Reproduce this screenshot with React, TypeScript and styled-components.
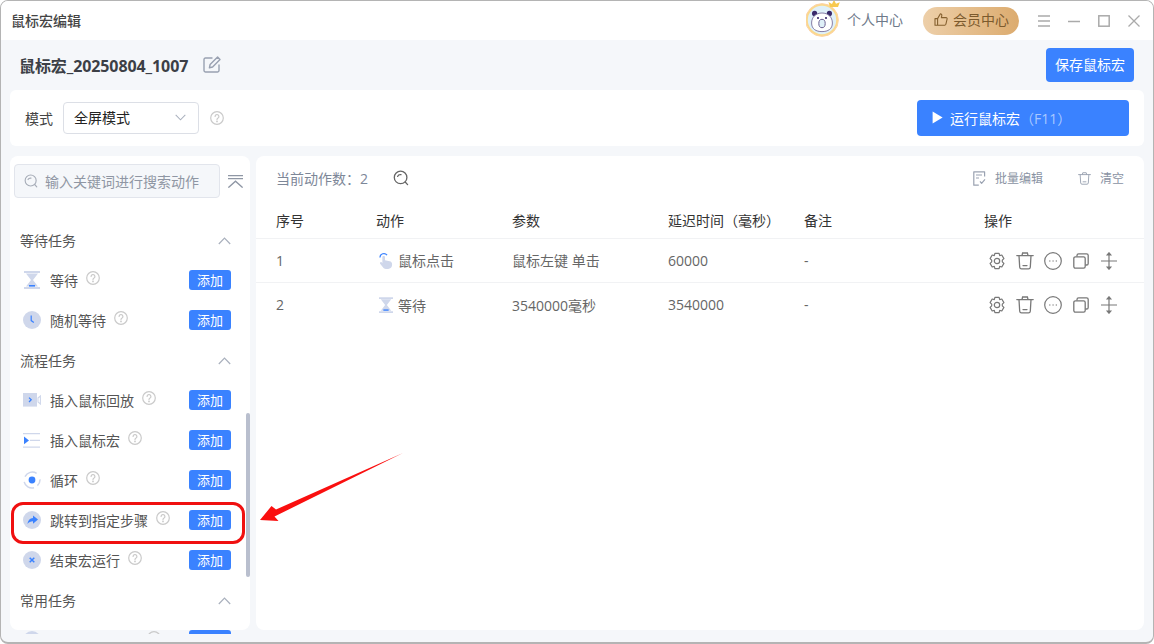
import React from 'react';
import styled, { createGlobalStyle } from 'styled-components';

const FONT = `"Open Sans", "Noto Sans CJK SC", sans-serif`;
const BLUE = '#3a82ff';
const PALE = '#cfd7eb';
const ROW_ICON = '#787878';

const GlobalStyle = createGlobalStyle`
    html, body { margin: 0; padding: 0; background: #fff; }
    * { box-sizing: border-box; }
`;

/* ---------- icons ---------- */
const HelpIcon = () => (
    <svg width="14" height="14" viewBox="0 0 14 14" fill="none" stroke="#cacaca" strokeWidth="1.2" strokeLinecap="round">
        <circle cx="7" cy="7" r="6.3" />
        <path d="M5.1 5.5a1.9 1.9 0 1 1 2.9 1.6c-.7.4-1 .8-1 1.5" />
        <circle cx="7" cy="10.4" r=".35" fill="#cacaca" />
    </svg>
);
const SearchIcon = ({ color, size }: { color: string; size: number }) => (
    <svg width={size} height={size} viewBox="0 0 16 16" fill="none" stroke={color} strokeWidth="1.3" strokeLinecap="round">
        <circle cx="7.6" cy="7.4" r="6.3" />
        <path d="M4.6 6.4c.6-1.3 2-1.9 3.4-1.7M12.2 12l2.4 2.6" />
    </svg>
);
const Chevron = ({ up }: { up?: boolean }) => (
    <svg width={up ? 13 : 11} height={up ? 8 : 7} viewBox="0 0 13 8" fill="none" stroke="#a9b0bd" strokeWidth="1.2">
        <path d={up ? 'M.8 7 6.5 1.2 12.2 7' : 'M.8 1 6.5 6.8 12.2 1'} />
    </svg>
);
const EditIcon = () => (
    <svg width="18" height="18" viewBox="0 0 18 18" fill="none" stroke="#99a1b1" strokeWidth="1.4" strokeLinecap="round" strokeLinejoin="round">
        <path d="M9 2H2.4C1.6 2 1 2.6 1 3.4v11.2c0 .8.6 1.4 1.4 1.4h12.2c.8 0 1.4-.6 1.4-1.4V9" />
        <path d="M14.6 1 17 3.4 9.6 11l-3.2.8.7-3.3z" />
    </svg>
);
const FoldIcon = () => (
    <svg width="15" height="13" viewBox="0 0 15 13" fill="none" stroke="#8f97a5" strokeWidth="1.3">
        <path d="M0 .7h15M0 3.6h15M.4 12.6 7.5 6.2l7.1 6.4" />
    </svg>
);
const Hourglass = ({ small }: { small?: boolean }) => (
    <svg width={small ? 14 : 16} height="18" viewBox="0 0 16 18">
        <path d="M0 0h16v2H0zM0 16h16v2H0z" fill={PALE} />
        <path d="M2 2.4h12L9 9l5 6.6H2L7 9z" fill={PALE} />
        <path d="M5 14h6v1.6H5z" fill={BLUE} />
    </svg>
);
const ClockIcon = () => (
    <svg width="18" height="18" viewBox="0 0 18 18" fill="none">
        <circle cx="9" cy="9" r="9" fill={PALE} />
        <path d="M8.2 4.4v5.2l2.6 2" stroke={BLUE} strokeWidth="1.2" />
    </svg>
);
const VideoIcon = () => (
    <svg width="18" height="14" viewBox="0 0 18 14" fill="none">
        <rect x="0" y="0" width="14" height="13.6" fill={PALE} />
        <path d="m6 4.6 2.2 2.2L6 9" stroke={BLUE} strokeWidth="1.3" />
        <path d="m15 5 2.4-2v8L15 9z" stroke={PALE} strokeWidth="1.1" />
    </svg>
);
const MacroIcon = () => (
    <svg width="18" height="15" viewBox="0 0 18 15">
        <path d="M0 0h17v1.3H0zM0 13.4h17v1.3H0zM7 6.8h10v1.3H7z" fill={PALE} />
        <path d="M1 3.6 6 7.4l-5 3.8z" fill={BLUE} />
    </svg>
);
const LoopIcon = () => (
    <svg width="18" height="18" viewBox="0 0 18 18" fill="none" stroke={PALE} strokeWidth="1.5">
        <path d="M2 5.6A8 8 0 0 1 13.6 2.4M17 8.4a8 8 0 0 1-2.6 6.2M11 16.8a8 8 0 0 1-9.8-6" />
        <circle cx="9" cy="9" r="3.4" fill={BLUE} stroke="none" />
    </svg>
);
const JumpIcon = () => (
    <svg width="18" height="18" viewBox="0 0 18 18">
        <circle cx="9" cy="9" r="9" fill={PALE} />
        <path d="M10 4.4 15 8.6 10 12.8V10.2C7.6 10.2 5.8 11 4.4 13 4.8 9.4 6.8 7.2 10 6.9z" fill={BLUE} />
    </svg>
);
const StopIcon = () => (
    <svg width="18" height="18" viewBox="0 0 18 18" fill="none">
        <circle cx="9" cy="9" r="9" fill={PALE} />
        <path d="m6.7 6.7 4.6 4.6m0-4.6-4.6 4.6" stroke={BLUE} strokeWidth="1.5" />
    </svg>
);
const HandIcon = () => (
    <svg width="14" height="19" viewBox="0 0 15 19" fill="none">
        <path d="M1 6.2a4.2 4.2 0 0 1 7.6-2.4" stroke={BLUE} strokeWidth="1.3" />
        <path d="M3.6 5.8c0-1.5 2.8-1.5 2.8 0v3.4l5 1c1.6.3 2.6 1.3 2.6 2.8v1.4c0 2.4-1.7 4.2-4.2 4.2H7.4c-1.4 0-2.4-.6-3.2-1.8L1.2 13c-.7-1.2.8-2.4 1.8-1.4l.6.8z" fill={PALE} />
    </svg>
);
const GearIcon = () => (
    <svg width="18" height="18" viewBox="0 0 18 18" fill="none" stroke={ROW_ICON} strokeWidth="1.2" strokeLinejoin="round">
        <path d="M6.9 1.4h4.2l.6 2.2 2.1-.6 2.1 3.6-1.6 1.6v1.6l1.6 1.6-2.1 3.6-2.1-.6-.6 2.2H6.9l-.6-2.2-2.1.6-2.1-3.6 1.6-1.6V8.2L2.1 6.6 4.2 3l2.1.6z" />
        <circle cx="9" cy="9" r="2.7" />
    </svg>
);
const TrashIcon = ({ color = ROW_ICON, size = 18 }: { color?: string; size?: number }) => (
    <svg width={size} height={size} viewBox="0 0 18 18" fill="none" stroke={color} strokeWidth="1.3" strokeLinecap="round">
        <path d="M.8 3.6h16.4M6 3.4 6.6 1h4.8l.6 2.4M3 3.8l.7 11.4c.1 1 .8 1.7 1.8 1.7h7c1 0 1.7-.7 1.8-1.7L15 3.8M7 13.6h4" />
    </svg>
);
const DotsIcon = () => (
    <svg width="18" height="18" viewBox="0 0 18 18" fill="none" stroke={ROW_ICON} strokeWidth="1.2">
        <circle cx="9" cy="9" r="8.3" />
        <path d="M5.4 9h.9M8.6 9h.9M11.8 9h.9" strokeWidth="1.3" />
    </svg>
);
const CopyIcon = () => (
    <svg width="16" height="16" viewBox="0 0 16 16" fill="none" stroke={ROW_ICON} strokeWidth="1.3" strokeLinejoin="round">
        <rect x=".8" y="3.8" width="11.4" height="11.4" rx="1.6" />
        <path d="M4 3.6V2.4C4 1.5 4.6.8 5.6.8h8c.9 0 1.6.7 1.6 1.6v8c0 1-.7 1.6-1.6 1.6h-1.2" />
    </svg>
);
const MoveIcon = () => (
    <svg width="16" height="18" viewBox="0 0 16 18" fill="none" stroke={ROW_ICON} strokeWidth="1.2">
        <path d="M0 9h16M8 1v16" />
        <path d="M6.2 3 8 .8 9.8 3zM6.2 15 8 17.2 9.8 15z" fill={ROW_ICON} />
    </svg>
);
const BatchIcon = () => (
    <svg width="13" height="15" viewBox="0 0 13 15" fill="none" stroke="#9aa2b1" strokeWidth="1.2" strokeLinejoin="round">
        <path d="M11.6 5.4V.8H.8v13.4h5" />
        <path d="M3 4h6M3 7h3M7 10.4l1.6 2 3.4-4" />
    </svg>
);
const HamburgerIcon = () => (
    <svg width="12" height="12" viewBox="0 0 12 12" stroke="#aaa" strokeWidth="1.3"><path d="M0 1h12M0 6h12M0 11h12" /></svg>
);
const MinIcon = () => (
    <svg width="12" height="12" viewBox="0 0 12 12" stroke="#aaa" strokeWidth="1.3"><path d="M0 6.5h12" /></svg>
);
const MaxIcon = () => (
    <svg width="12" height="12" viewBox="0 0 12 12" fill="none" stroke="#aaa" strokeWidth="1.5"><rect x=".8" y=".8" width="10.4" height="10.4" /></svg>
);
const CloseIcon = () => (
    <svg width="12" height="12" viewBox="0 0 12 12" stroke="#aaa" strokeWidth="1.3"><path d="m.5.5 11 11m0-11-11 11" /></svg>
);
const ThumbIcon = () => (
    <svg width="14" height="13" viewBox="0 0 14 13" fill="none" stroke="#85602f" strokeWidth="1.1" strokeLinejoin="round">
        <path d="M1 5.6h2.6v6.6H1zM3.6 5.6 6.4.8c1 0 1.6.7 1.4 1.7L7.4 4.6h4.6c.8 0 1.3.7 1.1 1.4l-1.2 5.2c-.2.6-.6 1-1.2 1H3.6" />
    </svg>
);
const PlayIcon = () => (
    <svg width="11" height="13" viewBox="0 0 11 13"><path d="M.6.6 10.6 6.5.6 12.4z" fill="#fff" /></svg>
);
const PandaAvatar = () => (
    <svg width="36" height="38" viewBox="0 0 36 38">
        <circle cx="16" cy="21" r="15.2" fill="#dff0f8" stroke="#fbd98b" strokeWidth="2" />
        <circle cx="16" cy="21" r="16.4" fill="none" stroke="#fbd2a6" strokeWidth="1" />
        <circle cx="8.6" cy="14.4" r="2.6" fill="#3a2a6a" />
        <circle cx="23.4" cy="14.4" r="2.6" fill="#3a2a6a" />
        <path d="M5.6 24c0-6 4.4-10 10.4-10s10.4 4 10.4 10-4.4 8.6-10.4 8.6S5.6 30 5.6 24z" fill="#fff" stroke="#6b5f90" strokeWidth=".8" />
        <circle cx="12" cy="19" r="1.1" fill="#3a2a6a" />
        <circle cx="20" cy="19" r="1.1" fill="#3a2a6a" />
        <ellipse cx="16" cy="24.5" rx="3.2" ry="4.2" fill="#dff0f8" stroke="#6b5f90" strokeWidth="1" />
        <path d="m24 8-1.6-5 3.6 2L28 .8l2 4 3.8-1.6L32 8z" fill="#f8c94e" />
    </svg>
);

/* ---------- window ---------- */
const Window = styled.div`
    position: relative;
    width: 1154px;
    height: 644px;
    overflow: hidden;
    background: #f5f7fa;
    border: 1px solid #b4b4b4;
    border-bottom-width: 2px;
    border-radius: 8px;
    font-family: ${FONT};
    font-size: 14px;
    color: #333;
`;
const TitleBar = styled.div`
    display: flex;
    align-items: center;
    justify-content: space-between;
    height: 39px;
    padding: 0 13px 0 10px;
    background: #fff;
`;
const AppName = styled.div`
    margin-top: -2px;
    color: #444;
    font-weight: 500;
`;
const TitleActions = styled.div`
    display: flex;
    align-items: center;
`;
const AvatarWrap = styled.div`
    display: flex;
    margin: -6px 5px 0 0;
`;
const ProfileLabel = styled.span`
    margin-top: -3px;
    color: #6f7a8a;
`;
const VipPill = styled.div`
    display: flex;
    align-items: center;
    gap: 5px;
    height: 28px;
    width: 96px;
    margin: 0 19px 0 20px;
    padding: 0 0 3px 11px;
    border-radius: 14px;
    color: #7c5a2d;
    background: linear-gradient(90deg, #edcfa9, #dcab6e);
`;
const WinControls = styled.div`
    display: flex;
    align-items: center;
    gap: 18px;
`;
const Content = styled.div`
    padding: 0 9px;
`;
const DocHeader = styled.div`
    display: flex;
    align-items: center;
    justify-content: space-between;
    height: 50px;
    padding: 0 10px 0 9px;
`;
const DocTitle = styled.div`
    display: flex;
    align-items: center;
    gap: 15px;
    font-size: 16px;
    letter-spacing: -0.1px;
    font-weight: 700;
    color: #3c3f46;
`;
const SaveButton = styled.button`
    width: 88px;
    height: 34px;
    padding: 0 0 2px;
    border: 0;
    border-radius: 4px;
    background: ${BLUE};
    color: #fff;
    font: 14px ${FONT};
`;
const ModeCard = styled.div`
    display: flex;
    align-items: center;
    height: 56px;
    padding: 0 15px;
    border-radius: 6px;
    background: #fff;
`;
const ModeLabel = styled.span`
    margin: -1px 10px 0 0;
    color: #444;
`;
const Select = styled.div`
    display: flex;
    align-items: center;
    justify-content: space-between;
    width: 136px;
    height: 32px;
    margin-right: 11px;
    padding: 0 12px 2px 10px;
    border: 1px solid #dcdfe6;
    border-radius: 4px;
    color: #222;
`;
const RunButton = styled.button`
    display: flex;
    align-items: center;
    gap: 7px;
    width: 212px;
    height: 36px;
    margin-left: auto;
    padding: 0 0 1px 15px;
    border: 0;
    border-radius: 4px;
    background: ${BLUE};
    color: #fff;
    font: 14px ${FONT};
`;
const RunKey = styled.span`
    color: #a9c8ff;
`;
const Panels = styled.div`
    display: flex;
    gap: 6px;
    margin-top: 10px;
    height: 474px;
`;

/* ---------- task sidebar ---------- */
const Sidebar = styled.aside`
    position: relative;
    flex: 0 0 240px;
    border-radius: 8px;
    background: #fff;
`;
const SearchRow = styled.div`
    display: flex;
    align-items: center;
    gap: 8px;
    height: 42px;
    margin-bottom: 22px;
    padding: 8px 0 0 4px;
`;
const SearchField = styled.div`
    display: flex;
    align-items: center;
    gap: 7px;
    width: 206px;
    height: 34px;
    padding-left: 9px;
    border: 1px solid #e2e5ec;
    border-radius: 4px;
    background: #f5f7fa;
    color: #8f96a3;
`;
const TaskList = styled.div`
    height: 414px;
    overflow: hidden;
    padding: 0 19px 0 10px;
`;
const SectionHead = styled.div`
    display: flex;
    align-items: center;
    justify-content: space-between;
    height: 40px;
    color: #555;
    svg { margin-top: 2px; }
`;
const TaskRow = styled.div`
    display: flex;
    align-items: center;
    height: 40px;
`;
const TaskIconSlot = styled.span`
    display: flex;
    align-items: center;
    justify-content: center;
    width: 18px;
    margin: 0 9px 0 3px;
`;
const TaskName = styled.span`
    margin-right: 8px;
    color: #555;
`;
const TaskHelp = styled.span`
    display: flex;
    margin-top: -4px;
`;
const AddButton = styled.button`
    width: 42px;
    height: 20px;
    margin-left: auto;
    padding: 0;
    border: 0;
    border-radius: 3px;
    background: ${BLUE};
    color: #fff;
    font: 13px/20px ${FONT};
`;
const Scrollbar = styled.div`
    position: absolute;
    top: 257px;
    right: 0;
    width: 4px;
    height: 164px;
    border-radius: 2px;
    background: #b9bfce;
`;

/* ---------- action table ---------- */
const MainPanel = styled.main`
    flex: 1;
    border-radius: 8px;
    background: #fff;
`;
const Toolbar = styled.div`
    display: flex;
    align-items: center;
    height: 46px;
    padding: 0 20px 2px;
    color: #7d8798;
`;
const CountLabel = styled.span`
    margin-right: 25px;
`;
const ToolGroup = styled.div`
    display: flex;
    align-items: center;
    gap: 35px;
    margin-left: auto;
`;
const ToolAction = styled.span`
    display: flex;
    align-items: center;
    gap: 9px;
    font-size: 12px;
    color: #8a93a3;
`;
const TableRow = styled.div<{ $head?: boolean; $last?: boolean }>`
    display: grid;
    grid-template-columns: 100px 136px 156px 136px 180px 1fr;
    align-items: center;
    height: ${(p) => (p.$head ? '37px' : '44px')};
    padding: 0 0 1px 20px;
    color: ${(p) => (p.$head ? '#333' : '#666')};
    border-bottom: ${(p) => (p.$last ? '0' : '1.5px solid #f1f2f4')};
`;
const ActionCell = styled.span`
    display: flex;
    align-items: center;
    gap: 5px;
    padding-left: 3px;
`;
const RowTools = styled.span`
    display: grid;
    grid-template-columns: repeat(5, 28px);
    justify-items: center;
    align-items: center;
    margin: 1px 0 0 -1px;
`;

/* ---------- annotation drawn on the screenshot ---------- */
const Highlight = styled.div`
    position: absolute;
    left: 10px;
    top: 501px;
    width: 234px;
    height: 42px;
    border: 3px solid #f01010;
    border-radius: 12px;
    pointer-events: none;
`;
const ArrowLayer = styled.svg`
    position: absolute;
    left: 257px;
    top: 450px;
`;

const sections = [
    {
        title: '等待任务',
        tasks: [
            { name: '等待', icon: <Hourglass /> },
            { name: '随机等待', icon: <ClockIcon /> },
        ],
    },
    {
        title: '流程任务',
        tasks: [
            { name: '插入鼠标回放', icon: <VideoIcon /> },
            { name: '插入鼠标宏', icon: <MacroIcon /> },
            { name: '循环', icon: <LoopIcon /> },
            { name: '跳转到指定步骤', icon: <JumpIcon /> },
            { name: '结束宏运行', icon: <StopIcon /> },
        ],
    },
    {
        title: '常用任务',
        tasks: [{ name: '打开文件/网址', icon: <StopIcon /> }],
    },
];

const actions = [
    { no: 1, icon: <HandIcon />, name: '鼠标点击', params: '鼠标左键 单击', delay: '60000', note: '-' },
    { no: 2, icon: <Hourglass small />, name: '等待', params: '3540000毫秒', delay: '3540000', note: '-' },
];

export default function App() {
    return (
        <Window>
            <GlobalStyle />
            <TitleBar>
                <AppName>鼠标宏编辑</AppName>
                <TitleActions>
                    <AvatarWrap>
                        <PandaAvatar />
                    </AvatarWrap>
                    <ProfileLabel>个人中心</ProfileLabel>
                    <VipPill>
                        <ThumbIcon />
                        会员中心
                    </VipPill>
                    <WinControls>
                        <HamburgerIcon />
                        <MinIcon />
                        <MaxIcon />
                        <CloseIcon />
                    </WinControls>
                </TitleActions>
            </TitleBar>
            <Content>
                <DocHeader>
                    <DocTitle>
                        鼠标宏_20250804_1007
                        <EditIcon />
                    </DocTitle>
                    <SaveButton>保存鼠标宏</SaveButton>
                </DocHeader>
                <ModeCard>
                    <ModeLabel>模式</ModeLabel>
                    <Select>
                        全屏模式
                        <Chevron />
                    </Select>
                    <HelpIcon />
                    <RunButton>
                        <PlayIcon />
                        <span>
                            运行鼠标宏<RunKey>（F11）</RunKey>
                        </span>
                    </RunButton>
                </ModeCard>
                <Panels>
                    <Sidebar>
                        <SearchRow>
                            <SearchField>
                                <SearchIcon color="#a7adb8" size={14} />
                                输入关键词进行搜索动作
                            </SearchField>
                            <FoldIcon />
                        </SearchRow>
                        <TaskList>
                            {sections.map((section) => (
                                <div key={section.title}>
                                    <SectionHead>
                                        {section.title}
                                        <Chevron up />
                                    </SectionHead>
                                    {section.tasks.map((task) => (
                                        <TaskRow key={task.name}>
                                            <TaskIconSlot>{task.icon}</TaskIconSlot>
                                            <TaskName>{task.name}</TaskName>
                                            <TaskHelp>
                                                <HelpIcon />
                                            </TaskHelp>
                                            <AddButton>添加</AddButton>
                                        </TaskRow>
                                    ))}
                                </div>
                            ))}
                        </TaskList>
                        <Scrollbar />
                    </Sidebar>
                    <MainPanel>
                        <Toolbar>
                            <CountLabel>当前动作数：2</CountLabel>
                            <SearchIcon color="#666" size={16} />
                            <ToolGroup>
                                <ToolAction>
                                    <BatchIcon />
                                    批量编辑
                                </ToolAction>
                                <ToolAction>
                                    <TrashIcon color="#9aa2b1" size={13} />
                                    清空
                                </ToolAction>
                            </ToolGroup>
                        </Toolbar>
                        <TableRow $head>
                            <span>序号</span>
                            <span>动作</span>
                            <span>参数</span>
                            <span>延迟时间（毫秒）</span>
                            <span>备注</span>
                            <span>操作</span>
                        </TableRow>
                        {actions.map((action, i) => (
                            <TableRow key={action.no} $last={i === actions.length - 1}>
                                <span>{action.no}</span>
                                <ActionCell>
                                    {action.icon}
                                    {action.name}
                                </ActionCell>
                                <span>{action.params}</span>
                                <span>{action.delay}</span>
                                <span>{action.note}</span>
                                <RowTools>
                                    <GearIcon />
                                    <TrashIcon />
                                    <DotsIcon />
                                    <CopyIcon />
                                    <MoveIcon />
                                </RowTools>
                            </TableRow>
                        ))}
                    </MainPanel>
                </Panels>
            </Content>
            <Highlight />
            <ArrowLayer width="150" height="75" viewBox="257 450 150 75">
                <path d="M402 452 275 508.5 270.5 505 259 519 277.5 520 273.5 515.5z" fill="#fa0f0f" />
            </ArrowLayer>
        </Window>
    );
}
